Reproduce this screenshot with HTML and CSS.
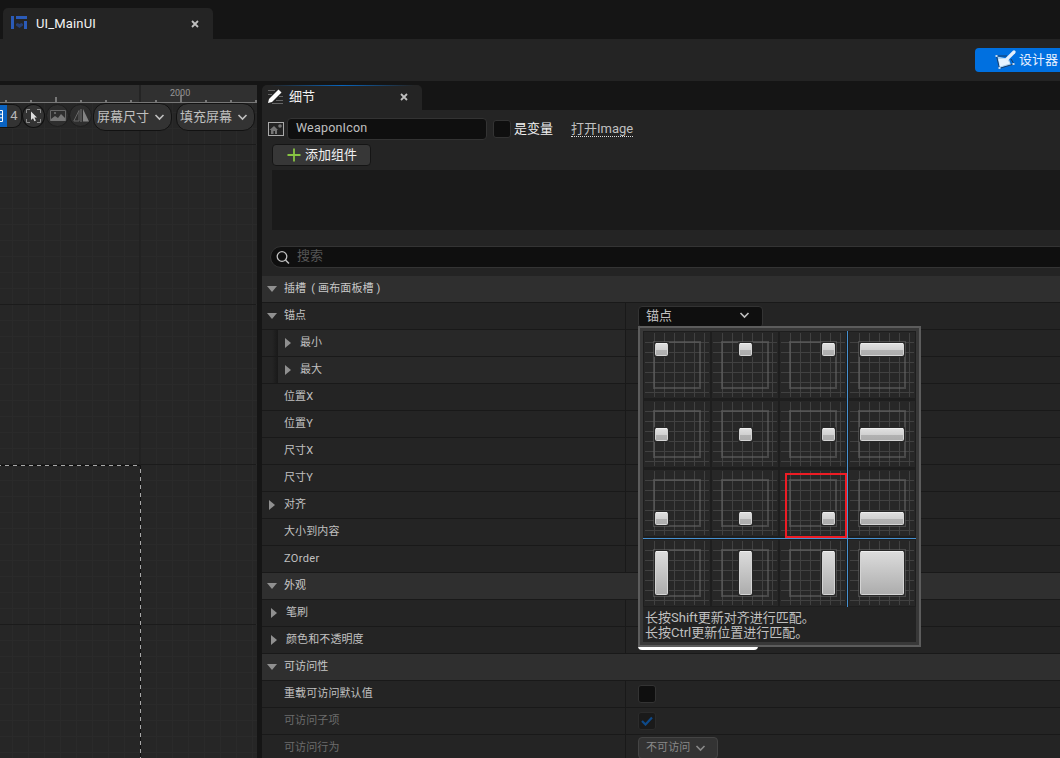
FILE: index.html
```
<!DOCTYPE html>
<html lang="zh-CN">
<head>
<meta charset="utf-8">
<title>UI_MainUI</title>
<link rel="stylesheet" href="styles.css">
</head>
<body>
<svg class="defs" aria-hidden="true">
  <defs>
    <linearGradient id="soft" x1="0" y1="0" x2="0" y2="1"><stop offset="0" stop-color="#dcdcdc"/><stop offset="1" stop-color="#acacac"/></linearGradient>
    <linearGradient id="split" x1="0" y1="0" x2="0" y2="1"><stop offset="0" stop-color="#e0e0e0"/><stop offset=".54" stop-color="#d0d0d0"/><stop offset=".54" stop-color="#b2b2b2"/><stop offset="1" stop-color="#acacac"/></linearGradient>
    <g id="cell">
      <path d="M9.5 0v64M19.5 0v64M29.5 0v64M39.5 0v64M49.5 0v64M59.5 0v64M0 9.500h64M0 19.500h64M0 29.500h64M0 39.500h64M0 49.500h64M0 59.500h64" stroke="#414141" fill="none"/>
      <rect x="9" y="9" width="46" height="46" fill="none" stroke="#666" stroke-opacity=".55" stroke-width="2"/>
    </g>
    <path id="chev" d="M1.500 1L5.500 5L9.500 1" fill="none" stroke="currentColor" stroke-width="1.600"/>
    <path id="cross" d="M1 1L7 7M7 1L1 7" fill="none" stroke="currentColor" stroke-width="1.800"/>
  </defs>
</svg>
<div class="app">
  <header class="titlebar">
    <div class="doc-tab">
      <svg class="doc-icon" width="16" height="14" viewBox="0 0 16 14"><path d="M0 0h3v13H0zM5 0h11v3H5zM13 5h3v8h-3z" fill="#2b5bb8"/><path d="M5 8l1.500-1L8.500 8l2-1L12 8v1.500L8.500 12 5 9.500z" fill="#263f75"/></svg>
      <span class="doc-name">UI_MainUI</span>
      <svg class="close" width="8" height="8"><use href="#cross"/></svg>
    </div>
  </header>
  <div class="toolbar">
    <button class="designer">
      <svg width="21" height="20" viewBox="0 0 21 20"><path d="M2.500 6.500L14 9l2 6-12 3z" fill="#a8d0f0"/><path d="M1.500 6l3 12.500M1 6h11M4 18.500L19 14l-3-5" stroke="#1b3c66" fill="none"/><path d="M3.500 9l8-.5 3.500 5-10 3z" fill="#e5f3ff"/><path d="M19 2L12 9" stroke="#e4eefa" stroke-width="3.200" stroke-linecap="round"/><path d="M.5 5h2v2h-2zM3.500 17h2v2h-2zM17.500 13h2v2h-2z" fill="#c4d8ee"/></svg>
      <span>设计器</span>
    </button>
  </div>
  <main class="work">
    <section class="viewport">
      <svg class="canvas" width="257" height="673" viewBox="0 85 257 673">
        <defs><pattern id="grid" x="12" y="0" width="16" height="16" patternUnits="userSpaceOnUse"><path d="M.5 0v16M0 .5h16" stroke="#2a2a2a"/></pattern></defs>
        <rect y="85" width="257" height="673" fill="#262626"/>
        <rect y="103" width="257" height="655" fill="url(#grid)"/>
        <path d="M0 144.500h256M0 304.500h256M0 464.500h256M0 624.500h256" stroke="#1b1b1b"/>
        <rect y="85" width="257" height="17" fill="#303030"/>
        <path d="M140 85v380" stroke="#202020" stroke-width="1.500"/>
        <path d="M0 102.500h257" stroke="#777"/>
        <path d="M6 100v2M31 100v2M81 100v2M106 100v2M131 100v2M156 100v2M206 100v2M231 100v2M256 100v2M56 97v5M181 95v7" stroke="#777" stroke-width="2"/>
        <text x="170" y="96" class="ruler-text">2000</text>
        <path d="M0 465.500h140.500V758" stroke="#111" fill="none"/>
        <path d="M-3 465.500H140" stroke="#a8a8a8" stroke-dasharray="4 4"/>
        <path d="M140.500 469V758" stroke="#a8a8a8" stroke-dasharray="4 4"/>
      </svg>
      <div class="view-tools">
        <div class="snap"><span class="snap-on"><svg width="7" height="22"><path d="M-1 5.500h3.500v11H-1M-1 9.200h3.500M-1 12.800h3.500" stroke="#fff" fill="none"/></svg></span><span class="snap-num">4</span></div>
        <span class="round bright"><svg width="15" height="14" viewBox="0 0 15 14"><path d="M.5 4V.500H4M11 .5h3.500V4M14.500 10v3.500H11M4 13.500H.5V10" fill="none" stroke="#8c8c8c"/><path d="M5 2.500v8.500l2-1.800 1.500 3 1.400-.7-1.500-2.900H11z" fill="#ddd"/></svg></span>
        <span class="round"><svg width="16" height="12" viewBox="0 0 16 12"><path d="M.5 11V.5h15V11" fill="none" stroke="#666"/><path d="M1 11V9l4-3 3 2 3-4 4 4v3z" fill="#777"/><circle cx="5" cy="3" r="1" fill="#777"/></svg></span>
        <span class="round"><svg width="16" height="13" viewBox="0 0 16 13"><path d="M6 1.500V12H.8z" fill="none" stroke="#666"/><path d="M8 0v13" stroke="#777"/><path d="M10 0v12.500h6z" fill="#858585"/></svg></span>
        <span class="pill">屏幕尺寸<svg width="11" height="7"><use href="#chev"/></svg></span>
        <span class="pill second">填充屏幕<svg width="11" height="7"><use href="#chev"/></svg></span>
      </div>
    </section>
    <section class="details">
      <div class="tab-well"><div class="panel-tab">
        <svg width="17" height="16" viewBox="0 0 17 16"><path d="M1 1.500h7M1 5.500h4M12 7.500h4M9 11.500h7M5 14.500h11" stroke="#666"/><path d="M1 14l1-4L11.500 0.500l3 3L5 13z" fill="#fff"/></svg>
        <span>细节</span><svg class="close" width="8" height="8"><use href="#cross"/></svg>
      </div></div>
      <div class="name-row">
        <svg class="img-icon" width="16" height="14" viewBox="0 0 16 14"><rect x=".5" y=".5" width="15" height="13" fill="none" stroke="#aaa"/><path d="M1.500 8L6 4l4 4H9v4H7V9H5.500v3H3V8z" fill="#777"/><circle cx="12" cy="4" r="1.800" fill="#777"/></svg>
        <div class="name-input">WeaponIcon</div>
        <span class="check"></span><span class="is-var">是变量</span><span class="open-link">打开Image</span>
      </div>
      <button class="add"><svg width="14" height="14"><path d="M7 .5v13M.5 7h13" stroke="#87c442" stroke-width="1.800"/></svg>添加组件</button>
      <div class="components"></div>
      <div class="search"><svg width="15" height="15" viewBox="0 0 15 15"><circle cx="6" cy="6.500" r="4.800" fill="none" stroke="#c0c0c0" stroke-width="1.300"/><path d="M9.500 10L13 13.500" stroke="#c0c0c0" stroke-width="1.500"/></svg><span>搜索</span></div>
      <div class="rows">
        <div class="row head"><i class="down"></i><span>插槽<b class="open">(</b>画布面板槽<b class="shut">)</b></span></div>
        <div class="row"><div class="key"><i class="down"></i><span>锚点</span></div><div class="value"><div class="combo">锚点<svg width="11" height="7"><use href="#chev"/></svg></div></div></div>
        <div class="row child"><div class="key"><i class="right"></i><span>最小</span></div></div>
        <div class="row child"><div class="key"><i class="right"></i><span>最大</span></div></div>
        <div class="row"><div class="key"><i></i><span>位置X</span></div></div>
        <div class="row"><div class="key"><i></i><span>位置Y</span></div></div>
        <div class="row"><div class="key"><i></i><span>尺寸X</span></div></div>
        <div class="row"><div class="key"><i></i><span>尺寸Y</span></div></div>
        <div class="row"><div class="key"><i class="right"></i><span>对齐</span></div></div>
        <div class="row"><div class="key"><i></i><span>大小到内容</span></div></div>
        <div class="row"><div class="key"><i></i><span class="latin">ZOrder</span></div></div>
        <div class="row head"><i class="down"></i><span>外观</span></div>
        <div class="row nudge"><div class="key"><i class="right"></i><span>笔刷</span></div></div>
        <div class="row nudge"><div class="key"><i class="right"></i><span>颜色和不透明度</span></div><div class="value"><div class="swatch"></div></div></div>
        <div class="row head"><i class="down"></i><span>可访问性</span></div>
        <div class="row"><div class="key"><i></i><span>重载可访问默认值</span></div><div class="value"><span class="check"></span></div></div>
        <div class="row dim"><div class="key"><i></i><span>可访问子项</span></div><div class="value"><span class="check"><svg width="12" height="10"><path d="M1 5l3.500 3.500L11 1.500" fill="none" stroke="#0e4a8a" stroke-width="2.200"/></svg></span></div></div>
        <div class="row dim"><div class="key"><i></i><span>可访问行为</span></div><div class="value"><span class="mini-combo">不可访问<svg width="11" height="7"><use href="#chev"/></svg></span></div></div>
      </div>
    </section>
  </main>
</div>
<div class="popup">
  <div class="anchors" id="anchors"></div>
  <i class="line-v"></i><i class="line-h"></i><i class="mark"></i>
  <p class="hint">长按Shift更新对齐进行匹配。<br>长按Ctrl更新位置进行匹配。</p>
</div>
<script src="anchors.js"></script>
</body>
</html>
```
FILE: styles.css
```
* { box-sizing: border-box; }
body { margin: 0; width: 1060px; height: 758px; overflow: hidden; background: #151515; color: #c0c0c0; font: 13px/18px Roboto, "Noto Sans CJK SC", sans-serif; }
button { font: inherit; color: inherit; margin: 0; }
svg { display: block; flex: none; }
.defs { position: absolute; width: 0; height: 0; }
.app { height: 758px; display: flex; flex-direction: column; }
.titlebar { flex: none; height: 39px; padding: 8px 0 0 3px; }
.doc-tab { width: 210px; height: 31px; display: flex; align-items: center; padding: 0 14px 0 8px; background: #242424; border-radius: 5px 5px 0 0; }
.doc-icon { margin-top: -1px; }
.doc-name { margin-left: 9px; color: #f4f4f4; font-size: 13px; letter-spacing: .15px; }
.close { margin-left: auto; color: #c0c0c0; }
.toolbar { flex: none; height: 42px; background: #242424; display: flex; justify-content: flex-end; padding-top: 9px; }
.designer { width: 85px; height: 24px; display: flex; align-items: center; gap: 3px; padding: 0 0 0 20px; border: 0; border-radius: 4px 0 0 4px; background: #0070e0; color: #e6f0ff; white-space: nowrap; overflow: hidden; }
.work { flex: 1; display: flex; padding-top: 4px; min-height: 0; }
.viewport { width: 257px; flex: none; position: relative; }
.ruler-text { font: 9px Roboto, sans-serif; fill: #969696; }
.view-tools { position: absolute; left: 0; top: 18px; display: flex; align-items: flex-start; }
.snap { display: flex; width: 22px; height: 24px; margin-top: 1px; border: 1px solid #131313; border-left: 0; border-radius: 0 9px 9px 0; background: #333; overflow: hidden; }
.snap-on { width: 7px; background: #0a63c2; }
.snap-num { flex: 1; text-align: center; line-height: 22px; font-size: 13px; color: #b8b8b8; }
.round { width: 23px; height: 23px; margin-top: 1px; border: 1px solid #1d1d1d; border-radius: 50%; background: #2e2e2e; display: flex; align-items: center; justify-content: center; }
.round.bright { border-color: #101010; background: #333; margin-right: 1px; height: 24px; }
.view-tools .pill { margin-left: 1px; width: 79px; height: 28px; border: 1px solid #121212; border-radius: 12px; background: #333; padding-left: 3px; display: flex; align-items: center; gap: 5px; white-space: nowrap; color: #c0c0c0; }
.view-tools .second { margin-left: 4px; }
.details { margin-left: 5px; flex: 1; min-width: 0; background: #242424; display: flex; flex-direction: column; align-items: flex-start; }
.tab-well { width: 100%; height: 25px; background: #151515; flex: none; }
.panel-tab { width: 160px; height: 25px; display: flex; align-items: center; gap: 5px; padding: 0 14px 2px 5px; color: #f0f0f0; border-radius: 5px 5px 0 0; background: linear-gradient(90deg, #242424 5%, #0865bd 50%, #242424 95%) top / 100% 1px no-repeat #242424; }
.name-row { height: 23px; margin: 7px 0 0 6px; display: flex; align-items: center; flex: none; }
.img-icon { margin-top: 1px; }
.name-input { margin-left: 3px; width: 200px; height: 22px; border: 1px solid #333; border-radius: 4px; background: #0f0f0f; padding-left: 8px; line-height: 18px; font-size: 12.500px; letter-spacing: .2px; }
.check { width: 18px; height: 18px; background: #0f0f0f; border: 1px solid #333; border-radius: 3px; display: flex; align-items: center; justify-content: center; }
.name-row .check { margin-left: 6px; }
.is-var { margin-left: 3px; color: #f0f0f0; }
.open-link { margin-left: 18px; border-bottom: 1px dotted #ddd; line-height: 15px; }
.add { width: 99px; height: 22px; margin: 4px 0 0 10px; display: flex; align-items: center; gap: 4px; padding: 0 0 1px 14px; border: 1px solid #151515; border-radius: 4px; background: #373737; color: #f0f0f0; white-space: nowrap; flex: none; }
.components { flex: none; width: 788px; margin: 4px 0 0 10px; height: 60px; background: #1a1a1a; }
.search { width: 800px; height: 22px; margin: 16px 0 0 8px; flex: none; border: 1px solid #343434; border-radius: 11px; background: #0f0f0f; padding-left: 5px; display: flex; align-items: center; gap: 6px; color: #555; }
.search span { padding-bottom: 2px; }
.rows { flex: none; width: 100%; margin-top: 8px; font-size: 11px; }
.row { height: 27px; border-bottom: 1px solid #191919; display: flex; align-items: stretch; }
.row > .key { width: 364px; flex: none; border-right: 1px solid #191919; padding-left: 5px; display: flex; align-items: center; }
.row span { line-height: 16px; letter-spacing: .1px; }
.row .latin { letter-spacing: .35px; }
.row b { font-weight: 400; }
.row .open { padding: 0 3px 0 5px; }
.row .shut { padding-left: 3px; }
.row i { width: 10px; height: 12px; background: #909090; margin-right: 7px; opacity: 0; }
.row i.down { opacity: 1; clip-path: polygon(0 3px, 100% 3px, 50% 9px); }
.row i.right { opacity: 1; clip-path: polygon(2px 1px, 8px 6px, 2px 11px); }
.row.head { background: #2f2f2f; align-items: center; padding-left: 5px; color: #c8c8c8; }
.row.child .key { padding-left: 21px; background: linear-gradient(90deg, #242424 0 10px, #191919 16px, #282828 16px); }
.row.nudge .key { padding-left: 7px; }
.row.dim { color: #6c6c6c; }
.value { padding-left: 12px; display: flex; align-items: center; }
.dim .check { background: #1a1a1a; border-color: #2b2b2b; }
.combo { width: 125px; height: 22px; margin-top: 1px; border: 1px solid #333; border-radius: 4px; background: #0f0f0f; display: flex; align-items: center; justify-content: space-between; padding: 0 12px 2px 7px; font-size: 13px; }
.swatch { width: 120px; height: 19px; background: #fff; border-radius: 4px; margin-top: 1px; }
.mini-combo { width: 80px; height: 22px; border: 1px solid #444; border-radius: 4px; background: #333; display: flex; align-items: center; gap: 5px; padding-left: 7px; color: #898989; white-space: nowrap; }
.popup { position: absolute; left: 638px; top: 326px; width: 283px; height: 321px; border: 2px solid #5c5c5c; background: #232323; box-shadow: inset 0 0 0 3px #383838; padding: 3px; }
.anchors { display: grid; grid-template-columns: 68px 68px 69px 68px; grid-template-rows: 69px 69px 70px 68px; background: #1e1e1e; }
.anchor { width: 66px; height: 66px; margin: 1px; padding: 1px; background: #272727; }
.line-v { position: absolute; left: 207px; top: 3px; width: 1px; height: 276px; background: #4590d0; }
.line-h { position: absolute; left: 3px; top: 210px; width: 273px; height: 1px; background: #4590d0; }
.mark { position: absolute; left: 145px; top: 145px; width: 62px; height: 65px; border: 2px solid #ed1c24; }
.hint { margin: 3px 0 0 2px; line-height: 15px; white-space: nowrap; color: #c0c0c0; }
```
FILE: anchors.js
```
const spans = [[10, 13], [26, 13], [41, 13], [10, 44]];
document.getElementById("anchors").innerHTML = spans.map(([y, h]) =>
  spans.map(([x, w]) => `<div class="anchor"><svg width="64" height="64"><use href="#cell"/>
    <rect x="${x - 1}" y="${y - 1}" width="${w + 2}" height="${h + 2}" rx="1" fill="#272727"/>
    <rect x="${x + .5}" y="${y + .5}" width="${w - 1}" height="${h - 1}" rx="1" fill="url(#${h > 20 ? "soft" : "split"})" stroke="#d4d4d4"/>
    <path d="M${x + 1} ${y + .5}h${w - 2}" stroke="#eee"/></svg></div>`).join("")
).join("");
```
